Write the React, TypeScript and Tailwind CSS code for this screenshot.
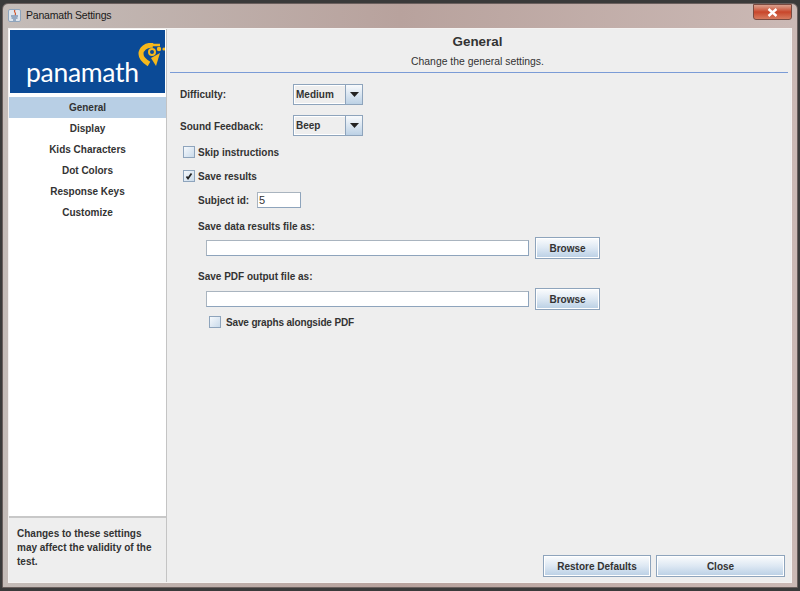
import React from 'react';

const btn =
  'flex items-center justify-center h-[22px] border border-[#8ea4bc] bg-gradient-to-b from-[#fbfcfd] via-[#dde8f3] to-[#b9cfe4] text-[#333333] font-bold text-[10px] shadow-[inset_0_0_0_1px_#ffffff]';

const CheckBox = ({ checked = false }: { checked?: boolean }) => (
  <span className="flex items-center justify-center w-[12px] h-[12px] border border-[#8ea4bc] bg-gradient-to-br from-[#f6f9fc] to-[#c9daea]">
    {checked && (
      <svg width="8" height="8" viewBox="0 0 8 8">
        <path d="M1.5 4.5 L3 6.5 L6.5 1.5" fill="none" stroke="#222222" strokeWidth="1.7" />
      </svg>
    )}
  </span>
);

const Combo = ({ value }: { value: string }) => (
  <div className="flex w-[70px] h-[21px] border border-[#8ea4bc] bg-[#eeeeee] shadow-[inset_0_0_0_1px_#ffffff]">
    <span className="flex-1 pl-[2px] leading-[19px] text-[#333333] font-bold text-[10px]">{value}</span>
    <span className="flex items-center justify-center w-[17px] border-l border-[#8ea4bc] bg-gradient-to-b from-[#f8fafc] to-[#bcd1e5]">
      <svg width="9" height="5" viewBox="0 0 9 5">
        <path d="M0 0 H9 L4.5 5 Z" fill="#222222" />
      </svg>
    </span>
  </div>
);

const TextField = ({ className, children }: { className: string; children?: React.ReactNode }) => (
  <div
    className={`h-[16px] bg-white border border-[#8ea4bc] border-t-[#a9b4bf] border-l-[#a9b4bf] pl-px leading-[15px] text-[#333333] text-[11px] ${className}`}
  >
    {children}
  </div>
);

const menu = ['General', 'Display', 'Kids Characters', 'Dot Colors', 'Response Keys', 'Customize'];

export default function App() {
  return (
    <div className="w-[800px] h-[591px] overflow-hidden flex flex-col bg-[#3a3a3a] font-['Liberation_Sans',sans-serif]">
      <div className="flex flex-col flex-1 mt-[3px] mx-[2px] mb-[3px] rounded-t-[6px] border border-[#6a5f5d] bg-gradient-to-r from-[#c4bcb8] via-[#b8a29d] to-[#cbb9b5]">
        {/* title bar */}
        <div className="flex items-start h-[24px] pl-[5px] pr-[5px] shrink-0">
          <span className="flex items-center justify-center w-[13px] h-[13px] mt-[5px] rounded-[2px] bg-[#dfe6ee] border border-[#8ea4bc]">
            <svg width="10" height="11" viewBox="0 0 10 11">
              <path d="M5 0 C3 2 7 3 5 5" fill="none" stroke="#d2552a" strokeWidth="1.2" />
              <path d="M1 6 H8 M1.5 8 H7.5 M3 10 H6" stroke="#4f6f95" strokeWidth="1.1" />
            </svg>
          </span>
          <span className="ml-[5px] mt-[4px] text-[10.5px] tracking-[-0.2px] leading-[15px] text-[#1a1a1a]">
            Panamath Settings
          </span>
          <span className="ml-auto flex items-center justify-center w-[39px] h-[16px] rounded-b-[3px] border border-[#7a4a40] bg-gradient-to-b from-[#d9a08e] via-[#c8452a] to-[#d67a5e]">
            <svg width="11" height="9" viewBox="0 0 11 9">
              <path d="M1.5 1 L9.5 8 M9.5 1 L1.5 8" stroke="#ffffff" strokeWidth="2.4" />
            </svg>
          </span>
        </div>

        <div className="flex flex-1 ml-[5px] mr-[5px] mb-[4px] border border-[#f4f2f1] bg-[#eeeeee] min-h-0">
          {/* sidebar */}
          <div className="flex flex-col w-[158px] shrink-0 border-r border-[#c4c4c4] bg-white">
            <div className="h-[63px] mx-px mt-px shrink-0 flex items-end bg-[#0b4a96] relative overflow-hidden">
              <span className="ml-[16px] mb-[5px] font-['Lato',sans-serif] text-[26.5px] leading-[32px] tracking-[-0.3px] text-white">
                panamath
              </span>
              <svg className="absolute left-[128px] top-[13px]" width="28" height="24" viewBox="0 0 28 24">
                <path d="M15 2.5 C8 1.5 3 6 3 11 C3 15 6 18 11 21" fill="none" stroke="#f6b81c" strokeWidth="5" />
                <path d="M15 2 H22" fill="none" stroke="#f6b81c" strokeWidth="2.5" />
                <circle cx="14" cy="9" r="3" fill="none" stroke="#f6b81c" strokeWidth="2" />
                <circle cx="21" cy="6" r="2.2" fill="#f6b81c" />
                <circle cx="26" cy="6" r="1.6" fill="#f6b81c" />
                <path d="M13 15 L22 10 L18 23 Z" fill="#f6b81c" />
              </svg>
            </div>
            <div className="flex flex-col mt-[4px] flex-1">
              {menu.map((m, i) => (
                <div
                  key={m}
                  className={`h-[21px] leading-[21px] text-center font-bold text-[10px] text-[#333333] ${i === 0 ? 'bg-[#b8cfe5]' : ''}`}
                >
                  {m}
                </div>
              ))}
            </div>
            <div className="h-[66px] shrink-0 border-t-2 border-[#c8c8c8] bg-[#eeeeee] pl-[8px] pt-[9px] text-[10px] leading-[14px] font-bold text-[#333333]">
              Changes to these settings
              <br />
              may affect the validity of the
              <br />
              test.
            </div>
          </div>

          {/* main pane */}
          <div className="flex flex-col flex-1 text-[10px] font-bold text-[#333333]">
            <div className="h-[44px] mx-[3px] pr-[3px] shrink-0 border-b border-[#7a9bd6] flex flex-col items-center">
              <span className="mt-[4px] text-[13.4px] leading-[17px]">General</span>
              <span className="mt-[5px] font-normal text-[10.4px] leading-[13px]">Change the general settings.</span>
            </div>

            <div className="flex items-center h-[21px] mt-[11px] ml-[13px]">
              <span className="w-[113px]">Difficulty:</span>
              <Combo value="Medium" />
            </div>
            <div className="flex items-center h-[21px] mt-[10px] ml-[13px]">
              <span className="w-[113px] pt-px">Sound Feedback:</span>
              <Combo value="Beep" />
            </div>
            <div className="flex items-center gap-[3px] h-[12px] mt-[10px] ml-[16px]">
              <CheckBox />
              <span>Skip instructions</span>
            </div>
            <div className="flex items-center gap-[3px] h-[12px] mt-[12px] ml-[16px]">
              <CheckBox checked />
              <span>Save results</span>
            </div>
            <div className="flex items-center h-[16px] mt-[10px] ml-[31px]">
              <span className="w-[59px]">Subject id:</span>
              <TextField className="w-[44px] font-normal">5</TextField>
            </div>
            <div className="ml-[31px] mt-[12px] leading-[13px]">Save data results file as:</div>
            <div className="flex items-center gap-[6px] h-[22px] mt-[4px] ml-[39px]">
              <TextField className="w-[323px]" />
              <div className={`${btn} w-[65px]`}>Browse</div>
            </div>
            <div className="ml-[31px] mt-[11px] leading-[13px]">Save PDF output file as:</div>
            <div className="flex items-center gap-[6px] h-[22px] mt-[5px] ml-[39px]">
              <TextField className="w-[323px]" />
              <div className={`${btn} w-[65px]`}>Browse</div>
            </div>
            <div className="flex items-center gap-[5px] h-[12px] mt-[6px] ml-[42px]">
              <CheckBox />
              <span className="tracking-[-0.15px]">Save graphs alongside PDF</span>
            </div>

            <div className="mt-auto mb-[5px] mr-[6px] flex justify-end gap-[5px]">
              <div className={`${btn} w-[108px]`}>Restore Defaults</div>
              <div className={`${btn} w-[129px]`}>Close</div>
            </div>
          </div>
        </div>
      </div>
    </div>
  );
}
